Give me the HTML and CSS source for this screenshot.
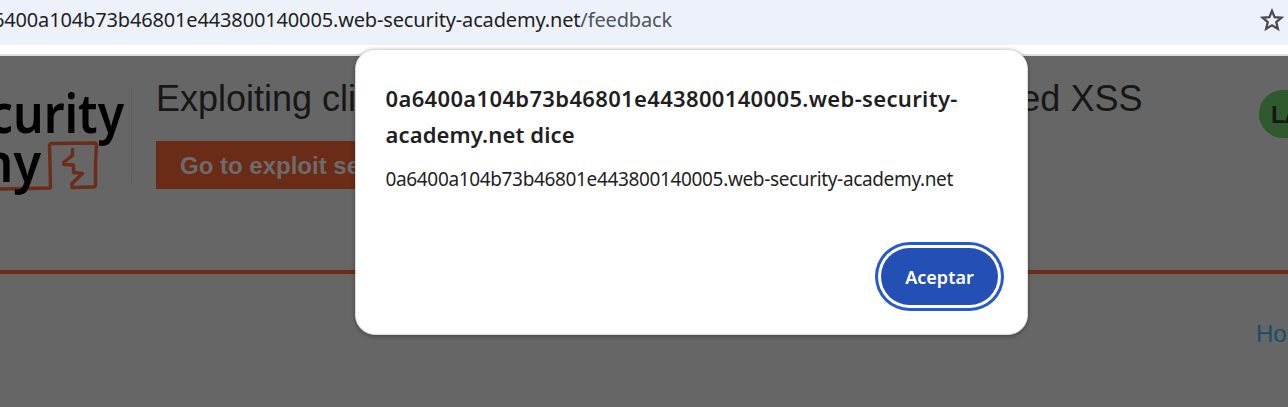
FILE: index.html
```
<!DOCTYPE html>
<html lang="es">
<head>
<meta charset="utf-8">
<title>Feedback</title>
<link rel="stylesheet" href="styles.css">
</head>
<body>
<div class="toolbar">
  <div class="url"><span class="url-text">0a6400a104b73b46801e443800140005.web-security-academy.net<span class="path">/feedback</span></span></div>
  <svg class="star" width="24" height="24" viewBox="0 0 24 24" fill="none" stroke="#47494d" stroke-width="2.2"><path d="M12 2.8 L14.6 9.2 L21.4 9.7 L16.2 14.1 L17.9 20.9 L12 17.2 L6.1 20.9 L7.8 14.1 L2.6 9.7 L9.4 9.2 Z"/></svg>
</div>
<div class="page">
  <header class="header">
    <svg class="logo" width="132" height="120" viewBox="0 0 132 120">
      <text class="logo-text" x="124" y="51" text-anchor="end" textLength="187" lengthAdjust="spacingAndGlyphs">security</text>
      <g fill="none" stroke="#6c2d18" stroke-width="3.4" stroke-linejoin="round" stroke-linecap="round">
        <path d="M0 107 L50.500 106 L50 82 L49.500 63 Q50 61.500 52 61.500 L95 61 Q96.500 61 96.500 63 L95.500 80 L95.500 103 Q95.500 105 93 105 L72 105.500 L72 101.500 L82.500 91.500 L73.500 90.500 L73.500 83 L64 82.500 L63.500 80.500 L72.500 73.500 L72.500 67.500"/>
      </g>
      <text class="logo-text" x="41" y="100" text-anchor="end" textLength="76" lengthAdjust="spacingAndGlyphs">my</text>
    </svg>
    <div class="title-block">
      <h2 class="title">Exploiting clickjacking vulnerability to trigger DOM-based XSS</h2>
      <a class="exploit">Go to exploit server</a>
    </div>
    <div class="lab">LAB</div>
  </header>
  <nav class="nav"><a class="home">Home</a></nav>
</div>
<div class="dialog">
  <h1 class="dialog-title"><span class="origin">0a6400a104b73b46801e443800140005.web-security-</span><br><span class="origin-end">academy.net dice</span></h1>
  <p class="message">0a6400a104b73b46801e443800140005.web-security-academy.net</p>
  <div class="actions"><button class="accept">Aceptar</button></div>
</div>
</body>
</html>
```
FILE: styles.css
```
* { box-sizing: border-box; }
body {
  margin: 0;
  width: 1288px;
  height: 407px;
  overflow: hidden;
  background: #fff;
  font-family: "Noto Sans", "Open Sans", sans-serif;
}
.toolbar {
  height: 45px;
  background: #edf2fa;
  display: flex;
  justify-content: space-between;
  overflow: hidden;
}
.url {
  width: 672px;
  height: 40px;
  display: flex;
  justify-content: flex-end;
  overflow: hidden;
  white-space: nowrap;
  font-size: 20px;
  line-height: 40px;
  letter-spacing: -0.15px;
  color: #1f1f1f;
}
.path { color: #50535a; }
.star { flex: none; margin: 8px 4px 0 0; }
.page {
  margin-top: 9px;
  height: 353px;
  border-top: 2px solid #dfdfdf;
  background: #666;
  overflow: hidden;
}
.header {
  height: 218px;
  padding-top: 22px;
  border-bottom: 4px solid #6c2d18;
  display: flex;
  align-items: flex-start;
  overflow: hidden;
}
.logo {
  flex: none;
  height: 120px;
  overflow: hidden;
  margin-top: 4px;
}
.logo-text {
  font-family: "Noto Sans", sans-serif;
  font-size: 54px;
  font-weight: 600;
  fill: #000;
}
.title-block {
  flex: none;
  width: 1103px;
  margin-left: -1px;
  padding-left: 24px;
  border-left: 1px solid #5b5b5b;
  height: 93px;
  margin-top: 12px;
}
.title {
  margin: -12px 0 22px;
  font: 400 36px/41px "Liberation Sans", Arial, sans-serif;
  color: #171717;
  white-space: nowrap;
}
.exploit {
  display: inline-block;
  height: 48px;
  padding: 0 24px;
  background: #6a2b17;
  color: #6c6c6c;
  font: 700 24px/50px "Liberation Sans", Arial, sans-serif;
}
.lab {
  flex: none;
  width: 120px;
  height: 48px;
  margin: 12px 0 0 25px;
  padding-left: 12px;
  border-radius: 24px;
  background: #2e5a2e;
  color: #171717;
  font: 700 24px/50px "Liberation Sans", Arial, sans-serif;
  letter-spacing: -1.5px;
}
.nav {
  display: flex;
  justify-content: flex-start;
  padding: 46px 0 0 1256px;
}
.home {
  font: 400 24px/28px "Liberation Sans", Arial, sans-serif;
  color: #174f6b;
}
.dialog {
  position: absolute;
  left: 355px;
  top: 49px;
  width: 673px;
  height: 286px;
  padding: 30px 24px 0 29.5px;
  border: 1px solid #dadada;
  border-radius: 20px;
  background: #fff;
  box-shadow: 0 1px 4px rgba(0, 0, 0, .35);
  color: #1f1f1f;
  clip-path: inset(-2px -8px -8px -8px);
}
.dialog-title {
  margin: 0;
  font-size: 22px;
  font-weight: 600;
  line-height: 36px;
  white-space: nowrap;
}
.origin { letter-spacing: 0.34px; }
.origin-end { letter-spacing: 0.12px; }
.message {
  margin: 12px 0 0;
  font-size: 19px;
  line-height: 30px;
  letter-spacing: -0.35px;
  white-space: nowrap;
}
.actions {
  display: flex;
  justify-content: flex-end;
  margin: 54px 0 0;
}
.accept {
  width: 117px;
  height: 57px;
  margin-right: 5px;
  border: 0;
  padding: 0;
  border-radius: 29px;
  background: #244fb5;
  box-shadow: 0 0 0 3px #fff, 0 0 0 6px #2859cc;
  color: #fff;
  font: 600 18px "Noto Sans", sans-serif;
}
```
